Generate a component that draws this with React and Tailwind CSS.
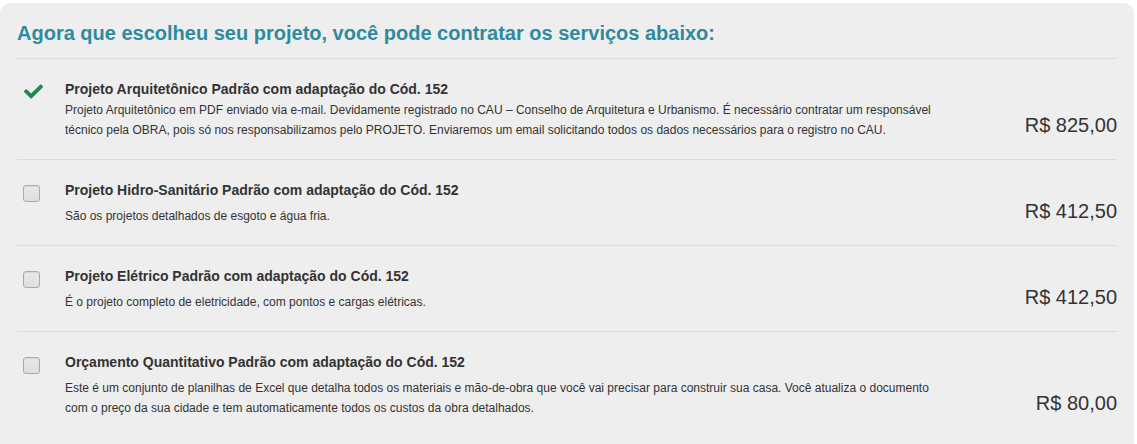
import { useState } from "react"

const services = [
  {
    title: "Projeto Arquitetônico Padrão com adaptação do Cód. 152",
    desc: "Projeto Arquitetônico em PDF enviado via e-mail. Devidamente registrado no CAU – Conselho de Arquitetura e Urbanismo. É necessário contratar um responsável técnico pela OBRA, pois só nos responsabilizamos pelo PROJETO. Enviaremos um email solicitando todos os dados necessários para o registro no CAU.",
    price: "R$ 825,00",
    checked: true,
    descMt: "mt-[3px]",
  },
  {
    title: "Projeto Hidro-Sanitário Padrão com adaptação do Cód. 152",
    desc: "São os projetos detalhados de esgoto e água fria.",
    price: "R$ 412,50",
    checked: false,
    descMt: "mt-[8px]",
  },
  {
    title: "Projeto Elétrico Padrão com adaptação do Cód. 152",
    desc: "É o projeto completo de eletricidade, com pontos e cargas elétricas.",
    price: "R$ 412,50",
    checked: false,
    descMt: "mt-[8px]",
  },
  {
    title: "Orçamento Quantitativo Padrão com adaptação do Cód. 152",
    desc: "Este é um conjunto de planilhas de Excel que detalha todos os materiais e mão-de-obra que você vai precisar para construir sua casa. Você atualiza o documento com o preço da sua cidade e tem automaticamente todos os custos da obra detalhados.",
    price: "R$ 80,00",
    checked: false,
    descMt: "mt-[8px]",
  },
]

function CheckMark() {
  return (
    <svg viewBox="0 0 512 512" className="w-[21px] h-[19px]" fill="#1b8a50">
      <path d="M173.898 439.404l-166.4-166.4c-9.997-9.997-9.997-26.206 0-36.204l36.203-36.204c9.997-9.998 26.207-9.998 36.204 0L192 312.69 432.095 72.596c9.997-9.997 26.207-9.997 36.204 0l36.203 36.204c9.997 9.997 9.997 26.206 0 36.204l-294.4 294.401c-9.998 9.997-26.207 9.997-36.204-.001z" />
    </svg>
  )
}

export default function App() {
  const [selected, setSelected] = useState(services.map((s) => s.checked))

  const toggle = (i) => {
    setSelected((prev) => prev.map((v, idx) => (idx === i ? !v : v)))
  }

  return (
    <div className="bg-white min-h-screen pt-[3px] font-['Liberation_Sans',Arial,sans-serif] text-[#333]">
      <div className="w-[1134px] rounded-[10px] bg-[#eeeeee] px-[17px] pt-[19px] pb-[20px]">
        <h2 className="text-[20px] leading-[22px] font-bold text-[#2e8aa0] mb-[14px]">
          Agora que escolheu seu projeto, você pode contratar os serviços abaixo:
        </h2>

        {services.map((s, i) => (
          <div key={s.title} className="border-t border-[#dcdcdc] pt-[22px] pb-[19px] flex items-end">
            <div className="flex flex-1 self-stretch">
              <div className="w-[48px] shrink-0 pl-[6px]">
                <button type="button" onClick={() => toggle(i)} className="block">
                  {selected[i] ? (
                    <span className="block mt-[1px]">
                      <CheckMark />
                    </span>
                  ) : (
                    <span className="block mt-[3px] w-[17px] h-[17px] rounded-[3px] border border-[#aaaaaa] bg-gradient-to-b from-[#e9e9e9] to-[#dedede] shadow-[inset_0_1px_1px_rgba(0,0,0,0.08)]" />
                  )}
                </button>
              </div>
              <div className="w-[885px]">
                <div className="text-[14px] leading-4 font-bold">{s.title}</div>
                <p className={`text-[12px] leading-[20px] ${s.descMt}`}>{s.desc}</p>
              </div>
            </div>
            <div className="text-[20px] leading-[20px] mb-[5px] text-right whitespace-nowrap">
              {s.price}
            </div>
          </div>
        ))}
      </div>
    </div>
  )
}
